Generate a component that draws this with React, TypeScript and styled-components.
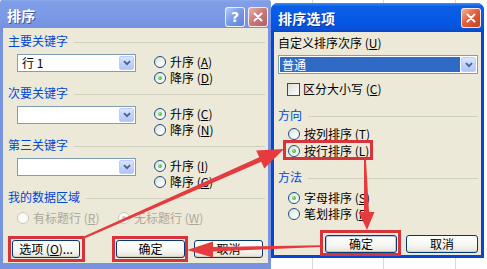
import React from "react";
import styled, { createGlobalStyle } from "styled-components";

const GlobalStyle = createGlobalStyle`
  html, body { margin: 0; padding: 0; background: #fff; }
  body {
    font-family: "SimSun", "Noto Sans CJK SC", "Noto Sans", sans-serif;
    font-size: 12px;
    color: #000;
  }
  * { box-sizing: border-box; }
`;

const Page = styled.div`
  position: relative;
  width: 487px;
  height: 269px;
  overflow: hidden;
  background-color: #fff;
  background-image: linear-gradient(#d8d8d8, #d8d8d8), linear-gradient(#d8d8d8, #d8d8d8),
    linear-gradient(#d8d8d8, #d8d8d8);
  background-size: 1px 100%;
  background-position: 312px 0, 383px 0, 455px 0;
  background-repeat: no-repeat;
`;

const Desk = styled.div`
  display: flex;
  align-items: flex-start;
`;

const Window = styled.div<{ $active?: boolean; $w: number; $h: number; $top: number }>`
  width: ${(p) => p.$w}px;
  height: ${(p) => p.$h}px;
  margin-top: ${(p) => p.$top}px;
  flex-shrink: 0;
  display: flex;
  flex-direction: column;
  border-radius: 7px 7px 0 0;
  background: ${(p) => (p.$active ? "#0846D0" : "#7893DE")};
`;

const TitleBar = styled.div<{ $active?: boolean; $h: number; $pt: number }>`
  height: ${(p) => p.$h}px;
  padding: ${(p) => p.$pt}px 3px 0 7px;
  display: flex;
  align-items: center;
  gap: 3px;
  border-radius: 7px 7px 0 0;
  background: ${(p) =>
    p.$active
      ? "linear-gradient(180deg, #3D8CF6 0%, #0C5FE4 12%, #0558E6 60%, #0A52D8 90%, #0846C4 100%)"
      : "linear-gradient(180deg, #A7BDF2 0%, #819FE8 15%, #7A98E4 70%, #7491DF 100%)"};
`;

const TitleText = styled.span<{ $lift: number }>`
  flex: 1;
  margin-bottom: ${(p) => p.$lift}px;
  color: #fff;
  font-weight: 700;
  font-size: 14px;
  line-height: 16px;
  letter-spacing: 0.3px;
  text-shadow: 1px 1px 0 rgba(10, 30, 110, 0.55);
`;

const CapButton = styled.span<{ $kind: "help" | "close" | "closeActive" }>`
  width: 20px;
  height: 20px;
  flex-shrink: 0;
  border-radius: 3px;
  border: 1px solid rgba(255, 255, 255, 0.85);
  display: flex;
  align-items: center;
  justify-content: center;
  color: #fff;
  font-family: "DejaVu Sans", sans-serif;
  font-weight: 700;
  font-size: 14px;
  background: ${(p) =>
    p.$kind === "help"
      ? "linear-gradient(135deg, #B8CBF6 0%, #7D9CE6 45%, #5E80DA 100%)"
      : p.$kind === "close"
      ? "linear-gradient(135deg, #E9B2AC 0%, #CC7B78 45%, #B45F62 100%)"
      : "linear-gradient(135deg, #F6B297 0%, #E4603C 45%, #C8401E 100%)"};
`;

const Body = styled.div<{ $mb: number; $pad: string }>`
  flex: 1;
  margin: 0 3px ${(p) => p.$mb}px 3px;
  padding: ${(p) => p.$pad};
  background: #ece9d8;
  display: flex;
  flex-direction: column;
`;

const GroupHeader = styled.div<{ $mt?: number }>`
  margin-top: ${(p) => p.$mt ?? 0}px;
  height: 14px;
  line-height: 14px;
  display: flex;
  align-items: center;
  color: #0046d5;
  white-space: nowrap;
  &::after {
    content: "";
    flex: 1;
    height: 1px;
    margin: 3px 0 0 6px;
    background: #d0d0bf;
  }
`;

const KeyRow = styled.div`
  margin-top: 6px;
  display: flex;
  align-items: flex-start;
`;

const Combo = styled.div<{ $w?: number; $h: number; $ml?: number; $mt?: number }>`
  width: ${(p) => (p.$w ? `${p.$w}px` : "100%")};
  height: ${(p) => p.$h}px;
  margin-left: ${(p) => p.$ml ?? 0}px;
  margin-top: ${(p) => p.$mt ?? 0}px;
  border: 1px solid #7f9db9;
  background: #fff;
  padding: 1px;
  display: flex;
  align-items: stretch;
  gap: 1px;
  flex-shrink: 0;
`;

const ComboText = styled.span<{ $selected?: boolean }>`
  flex: 1;
  display: flex;
  align-items: center;
  padding-left: ${(p) => (p.$selected ? 2 : 3)}px;
  line-height: 12px;
  background: ${(p) => (p.$selected ? "#316ac5" : "transparent")};
  color: ${(p) => (p.$selected ? "#fff" : "#000")};
`;

const ComboButton = styled.span`
  width: 15px;
  flex-shrink: 0;
  border-radius: 2px;
  border: 1px solid #bacff7;
  background: linear-gradient(180deg, #dbe6fe 0%, #c1d3fb 50%, #b1c6f6 100%);
  display: flex;
  align-items: center;
  justify-content: center;
`;

const RadioCol = styled.div<{ $ml: number; $mt?: number; $row: number }>`
  margin-left: ${(p) => p.$ml}px;
  margin-top: ${(p) => p.$mt ?? 0}px;
  display: grid;
  grid-auto-rows: ${(p) => p.$row}px;
`;

const Choice = styled.label<{ $disabled?: boolean }>`
  display: flex;
  align-items: center;
  gap: 4px;
  white-space: nowrap;
  line-height: 12px;
  color: ${(p) => (p.$disabled ? "#aca899" : "#000")};
`;

const RadioMark = styled.span<{ $checked?: boolean; $disabled?: boolean }>`
  width: 12px;
  height: 12px;
  flex-shrink: 0;
  border-radius: 50%;
  border: 1px solid ${(p) => (p.$disabled ? "#cac8bb" : "#1c5180")};
  background: ${(p) => (p.$disabled ? "#fbfbf9" : "linear-gradient(135deg, #d8d8d2 0%, #f4f4f0 50%, #ffffff 100%)")};
  display: flex;
  align-items: center;
  justify-content: center;
  &::after {
    content: "";
    display: ${(p) => (p.$checked ? "block" : "none")};
    width: 4px;
    height: 4px;
    border-radius: 50%;
    background: ${(p) => (p.$disabled ? "#cac8bb" : "radial-gradient(circle at 35% 35%, #8df08d, #21a121)")};
  }
`;

const CheckMark = styled.span`
  width: 13px;
  height: 13px;
  flex-shrink: 0;
  border: 1px solid #1c5180;
  background: linear-gradient(135deg, #dcdcd7 0%, #ffffff 100%);
`;

const DisabledRow = styled.div`
  margin-top: 6px;
  margin-left: 9px;
  height: 16px;
  display: grid;
  grid-template-columns: 101px auto;
`;

const CheckRow = styled.div`
  margin: 7px 0 0 9px;
  height: 16px;
  display: flex;
  align-items: center;
  gap: 3px;
  line-height: 12px;
`;

const PlainLabel = styled.div`
  height: 14px;
  line-height: 14px;
  white-space: nowrap;
`;

const ButtonRow = styled.div<{ $mt: number; $pl?: number; $pr?: number }>`
  margin-top: ${(p) => p.$mt}px;
  padding: 0 ${(p) => p.$pr ?? 0}px 0 ${(p) => p.$pl ?? 0}px;
  display: flex;
  justify-content: flex-end;
  gap: 9px;
`;

const PushButton = styled.span<{ $w: number; $default?: boolean; $push?: boolean }>`
  width: ${(p) => p.$w}px;
  height: 18px;
  margin-right: ${(p) => (p.$push ? "auto" : "0")};
  border: 1px solid #003c74;
  border-radius: 3px;
  background: linear-gradient(180deg, #ffffff 0%, #f5f5f1 60%, #e6e3d8 100%);
  box-shadow: ${(p) => (p.$default ? "inset 0 0 0 1px #b7c9f3" : "inset 0 -1px 0 #d6d0c5")};
  display: flex;
  align-items: center;
  justify-content: center;
  line-height: 12px;
  white-space: nowrap;
`;

const Key = styled.span`
  text-decoration: underline;
`;

const Overlay = styled.svg`
  position: absolute;
  left: 0;
  top: 0;
  pointer-events: none;
`;

const Chevron = () => (
  <svg width="8" height="6" viewBox="0 0 8 6">
    <path d="M1 1.2 L4 4.2 L7 1.2" fill="none" stroke="#4d6185" strokeWidth="1.8" />
  </svg>
);

const CloseGlyph = () => (
  <svg width="10" height="10" viewBox="0 0 10 10">
    <path d="M1.5 1.5 L8.5 8.5 M8.5 1.5 L1.5 8.5" stroke="#fff" strokeWidth="2" strokeLinecap="round" />
  </svg>
);

type RadioProps = { label: string; k: string; checked?: boolean; disabled?: boolean };
const Radio = ({ label, k, checked, disabled }: RadioProps) => (
  <Choice $disabled={disabled}>
    <RadioMark $checked={checked} $disabled={disabled} />
    <span>
      {label} (<Key>{k}</Key>)
    </span>
  </Choice>
);

type KeySectionProps = { title: string; value?: string; asc: string; desc: string; ascChecked: boolean };
const KeySection = ({ title, value, asc, desc, ascChecked }: KeySectionProps) => (
  <>
    <GroupHeader>{title}</GroupHeader>
    <KeyRow>
      <Combo $w={119} $h={18} $ml={9}>
        <ComboText>{value}</ComboText>
        <ComboButton>
          <Chevron />
        </ComboButton>
      </Combo>
      <RadioCol $ml={18} $row={16}>
        <Radio label="升序" k={asc} checked={ascChecked} />
        <Radio label="降序" k={desc} checked={!ascChecked} />
      </RadioCol>
    </KeyRow>
  </>
);

const Arrows = () => (
  <Overlay width={487} height={269} viewBox="0 0 487 269">
    <g fill="none" stroke="#d8323a" strokeWidth="3">
      <rect x="9.5" y="237.5" width="74" height="23" />
      <rect x="113.5" y="237.5" width="73" height="23" />
      <rect x="284.5" y="141.5" width="87" height="17" />
      <rect x="321.5" y="231.5" width="78" height="23" />
    </g>
    <g fill="#e63b3e">
      <polygon points="82.6,237.1 259.2,157.2 256.2,150.4 284,149 264.3,168.6 261.2,161.8 83.4,238.9" />
      <polygon points="364,160 366,160 369,212 374.5,212 367,230 358.5,212 364,212" />
      <polygon points="321,245.2 213,247 213,241.5 187,250 213,257.5 213,251.5 321,247" />
    </g>
  </Overlay>
);

export default function App() {
  return (
    <Page>
      <GlobalStyle />
      <Desk>
        <Window $w={271} $h={272} $top={-3}>
          <TitleBar $h={31} $pt={9}>
            <TitleText $lift={4}>排序</TitleText>
            <CapButton $kind="help">?</CapButton>
            <CapButton $kind="close">
              <CloseGlyph />
            </CapButton>
          </TitleBar>
          <Body $mb={6} $pad="6px 3px 0 5px">
            <KeySection title="主要关键字" value="行 1" asc="A" desc="D" ascChecked={false} />
            <KeySection title="次要关键字" asc="C" desc="N" ascChecked />
            <KeySection title="第三关键字" asc="I" desc="G" ascChecked />
            <GroupHeader>我的数据区域</GroupHeader>
            <DisabledRow>
              <Radio label="有标题行" k="R" disabled />
              <Radio label="无标题行" k="W" disabled checked />
            </DisabledRow>
            <ButtonRow $mt={14} $pl={4} $pr={2}>
              <PushButton $w={68} $push>
                选项 (<Key>O</Key>)...
              </PushButton>
              <PushButton $w={69}>确定</PushButton>
              <PushButton $w={69}>取消</PushButton>
            </ButtonRow>
          </Body>
        </Window>
        <Window $active $w={213} $h={255} $top={3}>
          <TitleBar $active $h={29} $pt={0}>
            <TitleText $lift={0}>排序选项</TitleText>
            <CapButton $kind="closeActive">
              <CloseGlyph />
            </CapButton>
          </TitleBar>
          <Body $mb={3} $pad="4px 3px 0 4px">
            <PlainLabel>
              自定义排序次序 (<Key>U</Key>)
            </PlainLabel>
            <Combo $h={19} $mt={5}>
              <ComboText $selected>普通</ComboText>
              <ComboButton>
                <Chevron />
              </ComboButton>
            </Combo>
            <CheckRow>
              <CheckMark />
              <span>
                区分大小写 (<Key>C</Key>)
              </span>
            </CheckRow>
            <GroupHeader $mt={11}>方向</GroupHeader>
            <RadioCol $ml={10} $mt={3} $row={17}>
              <Radio label="按列排序" k="T" />
              <Radio label="按行排序" k="L" checked />
            </RadioCol>
            <GroupHeader $mt={11}>方法</GroupHeader>
            <RadioCol $ml={10} $mt={6} $row={16}>
              <Radio label="字母排序" k="S" checked />
              <Radio label="笔划排序" k="R" />
            </RadioCol>
            <ButtonRow $mt={13}>
              <PushButton $w={72} $default>
                确定
              </PushButton>
              <PushButton $w={72}>取消</PushButton>
            </ButtonRow>
          </Body>
        </Window>
      </Desk>
      <Arrows />
    </Page>
  );
}
